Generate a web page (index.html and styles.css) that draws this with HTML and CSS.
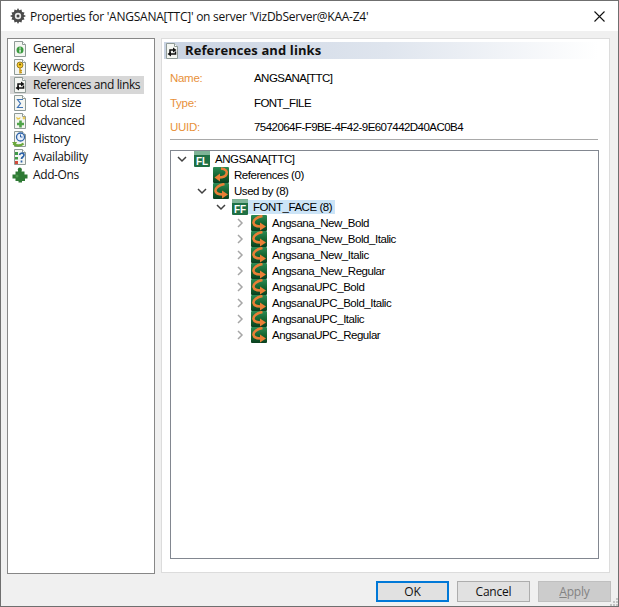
FILE: index.html
```html
<!DOCTYPE html>
<html lang="en">
<head>
<meta charset="utf-8">
<title>Properties</title>
<link rel="stylesheet" href="styles.css">
</head>
<body>
<svg class="defs" width="0" height="0" aria-hidden="true">
  <defs>
    <linearGradient id="nodebg" x1="0" y1="0" x2="0" y2="1"><stop offset="0" stop-color="#2c8a55"/><stop offset=".55" stop-color="#14632f"/><stop offset="1" stop-color="#0a4020"/></linearGradient>
    <symbol id="page" viewBox="0 0 16 16"><path d="M2.500.500h8l3 3v12h-11z" fill="#f4f6f2" stroke="#8f9a96"/><path d="M10.500.500v3h3" fill="#fff" stroke="#8f9a96"/></symbol>
    <symbol id="arrow-in" viewBox="0 0 16 16"><rect width="16" height="16" rx="1" fill="url(#nodebg)"/><path d="M8 1.500c5 .5 6.500 3 5.500 5.500S9.500 10.500 6 10.500" fill="none" stroke="#ea7f36" stroke-width="2.600"/><path d="M7 6.500 1.500 10.500 7 14.500z" fill="#ea7f36"/></symbol>
    <symbol id="arrow-out" viewBox="0 0 16 16"><rect width="16" height="16" rx="1" fill="url(#nodebg)"/><path d="M11.500 1C6 2 2 5 2.500 8s4 3.500 7.500 3.500" fill="none" stroke="#ea7f36" stroke-width="2.600"/><path d="M9 7.500 15 11.500 9 15.500z" fill="#ea7f36"/></symbol>
    <symbol id="refs" viewBox="0 0 16 16"><use href="#page"/><path d="M6 10V7h3" stroke="#111" stroke-width="1.500" fill="none"/><path d="M9 4.500 12.500 7 9 9.500z" fill="#111"/><path d="M11.500 8.500V11H7" stroke="#111" stroke-width="1.500" fill="none"/><path d="M7 8.500 3.500 11 7 13.500z" fill="#111"/></symbol>
  </defs>
</svg>
<main class="window">
  <header class="titlebar">
    <svg class="title-icon" viewBox="0 0 16 16" width="16" height="16"><path d="M8 0l1.200 2.300 2.300-.9.500 2.500 2.500.5-.9 2.300L16 8l-2.400 1.300.9 2.300-2.500.5-.5 2.500-2.300-.9L8 16l-1.200-2.300-2.300.9-.5-2.500-2.500-.5.9-2.300L0 8l2.400-1.300-.9-2.300 2.500-.5.5-2.500 2.300.9z" fill="#4a4a4a"/><circle cx="8" cy="8" r="3.200" fill="#e8e8e8"/><circle cx="8" cy="8" r="1.500" fill="#444"/></svg>
    <span class="title-text">Properties for 'ANGSANA[TTC]' on server 'VizDbServer@KAA-Z4'</span>
    <svg class="close" viewBox="0 0 11 11" width="11" height="11"><path d="M.5.500l10 10M10.500.500l-10 10" stroke="#111" stroke-width="1.100" fill="none"/></svg>
  </header>
  <div class="content">
    <div class="columns">
      <nav class="nav">
        <div class="nav-item">
          <svg class="ico" width="16" height="16"><use href="#page"/><circle cx="8" cy="9" r="3.500" fill="#3b9a3f"/><rect x="7.400" y="8.500" width="1.300" height="3" fill="#fff"/><rect x="7.400" y="6.500" width="1.300" height="1.200" fill="#fff"/></svg>
          <span class="nav-text">General</span>
        </div>
        <div class="nav-item">
          <svg class="ico" width="16" height="16"><use href="#page"/><circle cx="8" cy="6" r="3" fill="#f4c92a" stroke="#8a6a10" stroke-width=".8"/><path d="M8 8.500V14.500M8 11.500h2M8 13.500h2" stroke="#c9991a" stroke-width="1.500" fill="none"/><circle cx="8" cy="5.500" r="1" fill="#6b5210"/></svg>
          <span class="nav-text">Keywords</span>
        </div>
        <div class="nav-item active">
          <svg class="ico" width="16" height="16"><use href="#refs"/></svg>
          <span class="nav-text">References and links</span>
        </div>
        <div class="nav-item">
          <svg class="ico" width="16" height="16"><use href="#page"/><path d="M11 4.500H5.500L8.500 8.500l-3 4h5.500" fill="none" stroke="#3f73b5" stroke-width="1.200"/></svg>
          <span class="nav-text">Total size</span>
        </div>
        <div class="nav-item">
          <svg class="ico" width="16" height="16"><use href="#page"/><path d="M5 6.500l-1-2.500 2.500 1L8.500 4 8 6l-1.500.5z" fill="#eac84a"/><path d="M12 3l.8 1.500 1.200.5-1.200.5L12 7l-.8-1.500L10 5l1.200-.5z" fill="#e9c23d"/><path d="M8.500 7.500v7M5 11h7" stroke="#4fa44a" stroke-width="2.600"/></svg>
          <span class="nav-text">Advanced</span>
        </div>
        <div class="nav-item">
          <svg class="ico" width="16" height="16"><use href="#page"/><circle cx="8.500" cy="6" r="4" fill="#e8f0fa" stroke="#2d62a8" stroke-width="1.300"/><path d="M8.500 3.500V6h2" stroke="#2d62a8" fill="none"/><path d="M1.500 12.500c2 2.500 7 3 10 0" stroke="#6aa83c" stroke-width="2.400" fill="none"/><path d="M0 11l5 0-2 4z" fill="#6aa83c"/></svg>
          <span class="nav-text">History</span>
        </div>
        <div class="nav-item">
          <svg class="ico" width="16" height="16"><use href="#page"/><path d="M3 3h3v3H3z" fill="#3f9a46"/><path d="M3 8h3v2.500H3z" fill="#3f9a46"/><path d="M3 12h3v3H3z" fill="#d24b3c"/><path d="M7.500 6c.5-2.500 4.500-2.500 4.500 0 0 2-2.500 2-2.500 4M9.500 11.500v2" stroke="#2d62a8" stroke-width="1.700" fill="none"/></svg>
          <span class="nav-text">Availability</span>
        </div>
        <div class="nav-item">
          <svg class="ico" width="16" height="16" viewBox="0 0 16 16"><path d="M6 2.500h3.500v2h3v3H15.500v4h-2.500V14H10v1.500H6.500V14H3.500v-2.500H.5v-4h3v-3H6z" fill="#2f7a35"/><circle cx="7.800" cy="2.500" r="2" fill="#2f7a35"/><circle cx="5" cy="9" r="1.500" fill="#4d9a4d"/></svg>
          <span class="nav-text">Add-Ons</span>
        </div>
      </nav>
      <section class="panel">
        <h1 class="panel-head">
          <svg class="ico" width="16" height="16"><use href="#refs"/></svg>
          <span class="head-text">References and links</span>
        </h1>
        <dl class="props">
          <dt>Name:</dt><dd>ANGSANA[TTC]</dd>
          <dt>Type:</dt><dd>FONT_FILE</dd>
          <dt>UUID:</dt><dd>7542064F-F9BE-4F42-9E607442D40AC0B4</dd>
        </dl>
        <div class="tree">
          <div class="row lvl0">
            <svg class="chev" viewBox="0 0 10 10" width="10" height="10"><path d="M1 3l4 4 4-4" class="chev-open"/></svg>
            <svg class="node" viewBox="0 0 16 16" width="16" height="16"><rect width="16" height="16" rx="1" fill="#1f7044"/><rect width="16" height="4" fill="#7fb497"/><text x="8" y="14" class="badge">FL</text></svg>
            <span class="label">ANGSANA[TTC]</span>
          </div>
          <div class="row lvl1">
            <span class="chev-space"></span>
            <svg class="node" width="16" height="16"><use href="#arrow-in"/></svg>
            <span class="label">References (0)</span>
          </div>
          <div class="row lvl1">
            <svg class="chev" viewBox="0 0 10 10" width="10" height="10"><path d="M1 3l4 4 4-4" class="chev-open"/></svg>
            <svg class="node" width="16" height="16"><use href="#arrow-out"/></svg>
            <span class="label">Used by (8)</span>
          </div>
          <div class="row lvl2">
            <svg class="chev" viewBox="0 0 10 10" width="10" height="10"><path d="M1 3l4 4 4-4" class="chev-open"/></svg>
            <svg class="node" viewBox="0 0 16 16" width="16" height="16"><rect width="16" height="16" rx="1" fill="#1f7044"/><rect width="16" height="4" fill="#7fb497"/><text x="8" y="14" class="badge">FF</text></svg>
            <span class="label selected">FONT_FACE (8)</span>
          </div>
          <div class="row lvl3"><svg class="chev" viewBox="0 0 10 10" width="10" height="10"><path d="M3 1l4 4-4 4" class="chev-closed"/></svg><svg class="node" width="16" height="16"><use href="#arrow-out"/></svg><span class="label">Angsana_New_Bold</span></div>
          <div class="row lvl3"><svg class="chev" viewBox="0 0 10 10" width="10" height="10"><path d="M3 1l4 4-4 4" class="chev-closed"/></svg><svg class="node" width="16" height="16"><use href="#arrow-out"/></svg><span class="label">Angsana_New_Bold_Italic</span></div>
          <div class="row lvl3"><svg class="chev" viewBox="0 0 10 10" width="10" height="10"><path d="M3 1l4 4-4 4" class="chev-closed"/></svg><svg class="node" width="16" height="16"><use href="#arrow-out"/></svg><span class="label">Angsana_New_Italic</span></div>
          <div class="row lvl3"><svg class="chev" viewBox="0 0 10 10" width="10" height="10"><path d="M3 1l4 4-4 4" class="chev-closed"/></svg><svg class="node" width="16" height="16"><use href="#arrow-out"/></svg><span class="label">Angsana_New_Regular</span></div>
          <div class="row lvl3"><svg class="chev" viewBox="0 0 10 10" width="10" height="10"><path d="M3 1l4 4-4 4" class="chev-closed"/></svg><svg class="node" width="16" height="16"><use href="#arrow-out"/></svg><span class="label">AngsanaUPC_Bold</span></div>
          <div class="row lvl3"><svg class="chev" viewBox="0 0 10 10" width="10" height="10"><path d="M3 1l4 4-4 4" class="chev-closed"/></svg><svg class="node" width="16" height="16"><use href="#arrow-out"/></svg><span class="label">AngsanaUPC_Bold_Italic</span></div>
          <div class="row lvl3"><svg class="chev" viewBox="0 0 10 10" width="10" height="10"><path d="M3 1l4 4-4 4" class="chev-closed"/></svg><svg class="node" width="16" height="16"><use href="#arrow-out"/></svg><span class="label">AngsanaUPC_Italic</span></div>
          <div class="row lvl3"><svg class="chev" viewBox="0 0 10 10" width="10" height="10"><path d="M3 1l4 4-4 4" class="chev-closed"/></svg><svg class="node" width="16" height="16"><use href="#arrow-out"/></svg><span class="label">AngsanaUPC_Regular</span></div>
        </div>
      </section>
    </div>
    <footer class="buttons">
      <button class="btn default">OK</button>
      <button class="btn">Cancel</button>
      <button class="btn disabled"><u>A</u>pply</button>
    </footer>
  </div>
  <svg class="grip" viewBox="0 0 8 8" width="8" height="8"><path d="M6 0h2v2H6zM3 3h2v2H3zM6 3h2v2H6zM0 6h2v2H0zM3 6h2v2H3zM6 6h2v2H6z" fill="#c4c4c4"/></svg>
</main>
</body>
</html>
```

FILE: styles.css
```css
* { box-sizing: border-box; }
html, body { margin: 0; padding: 0; width: 619px; height: 607px; overflow: hidden; }
body { font-family: "Liberation Sans", Arial, sans-serif; font-size: 12px; color: #000; }
.defs { position: absolute; }
.window { position: relative; width: 619px; height: 607px; border: 1px solid #6f6f6f; background: #f0f0f0; display: flex; flex-direction: column; }
.grip { position: absolute; right: 0; bottom: 0; }
.titlebar { height: 30px; background: #fff; display: flex; align-items: center; padding: 0 11px 0 9px; flex: none; }
.title-icon { margin-top: -1px; flex: none; }
.title-text { margin-left: 4px; font-family: "Open Sans", "Noto Sans", sans-serif; font-size: 12px; flex: 1; white-space: nowrap; letter-spacing: -.25px; color: #111; }
.close { flex: none; margin-right: 2px; }
.content { flex: 1; display: flex; flex-direction: column; padding: 7px 7px 4px 6px; }
.columns { display: flex; gap: 6px; height: 536px; flex: none; }
.nav { width: 148px; flex: none; background: #fff; border: 1px solid #878787; padding: 1px 10px 0 2px; font-family: "Open Sans", "Noto Sans", sans-serif; }
.nav-item { height: 18px; display: flex; align-items: center; gap: 5px; padding-left: 2px; color: #111; white-space: nowrap; font-size: 12px; letter-spacing: -.4px; }
.nav-text { margin-top: -2px; }
.nav-item.active { background: #d7d7d7; }
.ico { flex: none; }
.panel { flex: 1; background: #fff; border: 1px solid #dcdcdc; padding: 3px 2px 0; margin: 0 1px 1px 0; display: flex; flex-direction: column; min-width: 0; }
.panel-head { margin: 0; height: 17px; display: flex; align-items: center; gap: 5px; font-family: "Open Sans", "Noto Sans", sans-serif; font-size: 13px; font-weight: 700; letter-spacing: .1px; color: #111; background: linear-gradient(90deg, #c9d3e2 0%, #dfe5ee 50%, #ffffff 98%); flex: none; }
.head-text { margin-top: -2px; }
.props { margin: 7px 9px 0 6px; display: grid; grid-template-columns: 84px 1fr; grid-auto-rows: 24.500px; align-items: center; border-bottom: 1px solid #a9a9a9; height: 74px; color: #000; font-size: 11.500px; flex: none; }
.props dt { color: #e8913a; letter-spacing: -.3px; }
.props dd { margin: 0; letter-spacing: -.55px; }
.tree { margin: 10px 8px 0 6px; height: 409px; border: 1px solid #828790; flex: none; font-size: 11.500px; letter-spacing: -.45px; color: #000; }
.row { height: 16px; display: flex; align-items: center; white-space: nowrap; }
.lvl0 { padding-left: 6px; }
.lvl1 { padding-left: 26px; }
.lvl2 { padding-left: 45px; }
.lvl3 { padding-left: 64px; }
.chev { flex: none; margin-right: 6px; }
.lvl0 .chev { margin-right: 7px; }
.chev-space { width: 16px; flex: none; }
.chev-open { fill: none; stroke: #404040; stroke-width: 1.500; }
.chev-closed { fill: none; stroke: #a6a6a6; stroke-width: 1.500; }
.node { flex: none; }
.badge { font-family: "Liberation Sans", Arial, sans-serif; font-size: 10px; font-weight: 700; fill: #fff; text-anchor: middle; letter-spacing: 0; }
.label { margin-left: 5px; }
.selected { background: #cce4f7; margin-left: 0; padding: 1px 3px 1px 5px; }
.buttons { display: flex; gap: 8px; justify-content: flex-end; margin-top: 7px; height: 21px; }
.btn { width: 73px; height: 21px; padding: 0; background: #e1e1e1; border: 1px solid #adadad; font-family: "Open Sans", "Noto Sans", sans-serif; font-size: 12px; letter-spacing: -.2px; color: #111; }
.btn.default { border: 2px solid #0078d7; }
.btn.disabled { background: #cccccc; border-color: #bfbfbf; color: #838383; }
```
